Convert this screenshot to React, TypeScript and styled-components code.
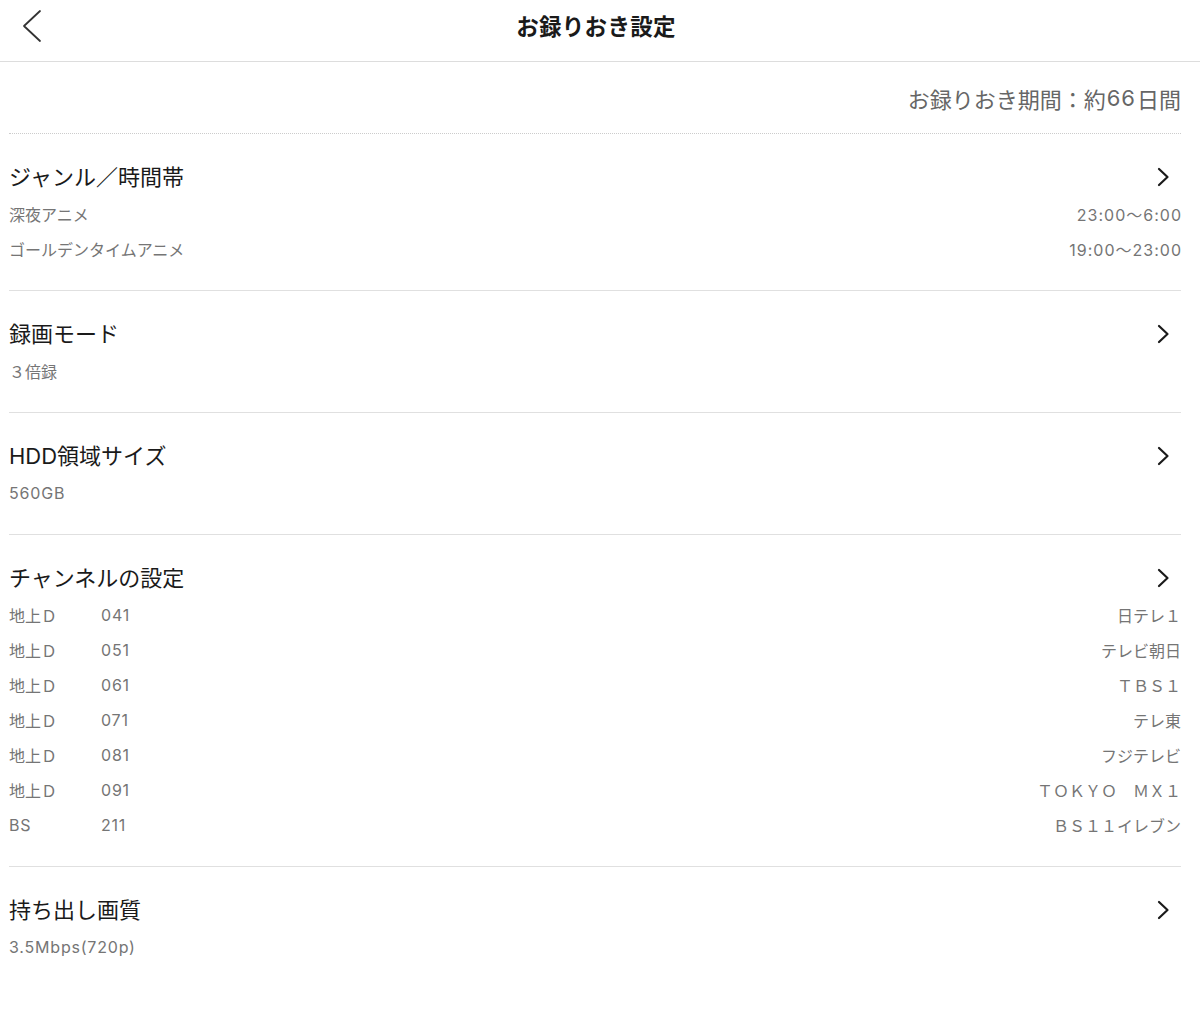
import React from "react";
import styled, { createGlobalStyle } from "styled-components";

const GlobalStyle = createGlobalStyle`
  html, body {
    margin: 0;
    padding: 0;
    background: #ffffff;
    font-family: Inter, "Noto Sans CJK JP", "Noto Sans", sans-serif;
  }
`;

const Page = styled.div`
  width: 1200px;
  min-height: 1012px;
  background: #fff;
`;

const Header = styled.header`
  position: relative;
  height: 61px;
  border-bottom: 1px solid #dddddd;
  display: flex;
  align-items: center;
  justify-content: center;
`;

const BackButton = styled.button`
  position: absolute;
  left: 18px;
  top: 6px;
  width: 28px;
  height: 40px;
  padding: 0;
  border: none;
  background: none;
  display: flex;
  align-items: center;
  justify-content: center;
`;

const Title = styled.h1`
  margin: -7px 8px 0 0;
  font-size: 22.5px;
  font-weight: 700;
  color: #1a1a1a;
  line-height: 1;
  letter-spacing: 0.3px;
`;

const Content = styled.main`
  padding: 0 19px 0 9px;
`;

const PeriodRow = styled.div`
  height: 70px;
  display: flex;
  align-items: center;
  justify-content: flex-end;
  border-bottom: 1px dotted #cccccc;
  font-size: 22px;
  color: #666666;
  padding-top: 1px;
`;

const PeriodNum = styled.span`
  letter-spacing: 1px;
  margin: 0 1px;
`;

const Section = styled.section<{ $last?: boolean }>`
  padding: 29px 0 24px;
  border-bottom: ${(p) => (p.$last ? "none" : "1px solid #e0e0e0")};
`;

const SectionHead = styled.div`
  height: 28px;
  display: flex;
  align-items: center;
  justify-content: space-between;
`;

const SectionTitle = styled.h2`
  margin: 0;
  font-size: 22px;
  font-weight: 400;
  color: #1a1a1a;
  line-height: 28px;
`;

const Chevron = styled.span`
  display: flex;
  align-items: center;
  padding-right: 11px;
`;

const SubList = styled.div`
  margin-top: 5px;
`;

const SubRow = styled.div`
  height: 35px;
  display: flex;
  align-items: center;
  font-size: 16px;
  color: #757575;
`;

const SubLabel = styled.span<{ $w?: number; $latin?: boolean }>`
  width: ${(p) => (p.$w ? `${p.$w}px` : "auto")};
  flex-shrink: 0;
  letter-spacing: ${(p) => (p.$latin ? "0.8px" : "0")};
`;

const Num = styled.span`
  letter-spacing: 0.8px;
`;

const SubRight = styled.span<{ $latin?: boolean }>`
  margin-left: auto;
  letter-spacing: ${(p) => (p.$latin ? "1px" : "0")};
  margin-right: ${(p) => (p.$latin ? "-1px" : "0")};
`;

const ChevronRight = () => (
  <svg width="13" height="20" viewBox="0 0 13 20">
    <polyline
      points="2,2 10.5,10 2,18"
      fill="none"
      stroke="#1a1a1a"
      strokeWidth="2.2"
      strokeLinecap="round"
      strokeLinejoin="round"
    />
  </svg>
);

type Row = { left: string; mid?: string; right?: string; latinLeft?: boolean; latinRight?: boolean };

const sections: { title: string; rows: Row[] }[] = [
  {
    title: "ジャンル／時間帯",
    rows: [
      { left: "深夜アニメ", right: "23:00～6:00", latinRight: true },
      { left: "ゴールデンタイムアニメ", right: "19:00～23:00", latinRight: true },
    ],
  },
  { title: "録画モード", rows: [{ left: "３倍録" }] },
  { title: "HDD領域サイズ", rows: [{ left: "560GB", latinLeft: true }] },
  {
    title: "チャンネルの設定",
    rows: [
      { left: "地上Ｄ", mid: "041", right: "日テレ１" },
      { left: "地上Ｄ", mid: "051", right: "テレビ朝日" },
      { left: "地上Ｄ", mid: "061", right: "ＴＢＳ１" },
      { left: "地上Ｄ", mid: "071", right: "テレ東" },
      { left: "地上Ｄ", mid: "081", right: "フジテレビ" },
      { left: "地上Ｄ", mid: "091", right: "ＴＯＫＹＯ　ＭＸ１" },
      { left: "BS", mid: "211", right: "ＢＳ１１イレブン", latinLeft: true },
    ],
  },
  { title: "持ち出し画質", rows: [{ left: "3.5Mbps(720p)", latinLeft: true }] },
];

export default function App() {
  return (
    <Page>
      <GlobalStyle />
      <Header>
        <BackButton aria-label="戻る">
          <svg width="20" height="34" viewBox="0 0 20 34">
            <polyline
              points="18,2 2,17 18,32"
              fill="none"
              stroke="#333"
              strokeWidth="1.8"
              strokeLinecap="round"
              strokeLinejoin="round"
            />
          </svg>
        </BackButton>
        <Title>お録りおき設定</Title>
      </Header>
      <Content>
        <PeriodRow>
          お録りおき期間：約<PeriodNum>66</PeriodNum>日間
        </PeriodRow>
        {sections.map((s, i) => (
          <Section key={s.title} $last={i === sections.length - 1}>
            <SectionHead>
              <SectionTitle>{s.title}</SectionTitle>
              <Chevron>
                <ChevronRight />
              </Chevron>
            </SectionHead>
            <SubList>
              {s.rows.map((r, j) => (
                <SubRow key={j}>
                  <SubLabel $w={r.mid ? 92 : undefined} $latin={r.latinLeft}>
                    {r.left}
                  </SubLabel>
                  {r.mid && <Num>{r.mid}</Num>}
                  {r.right && <SubRight $latin={r.latinRight}>{r.right}</SubRight>}
                </SubRow>
              ))}
            </SubList>
          </Section>
        ))}
      </Content>
    </Page>
  );
}
